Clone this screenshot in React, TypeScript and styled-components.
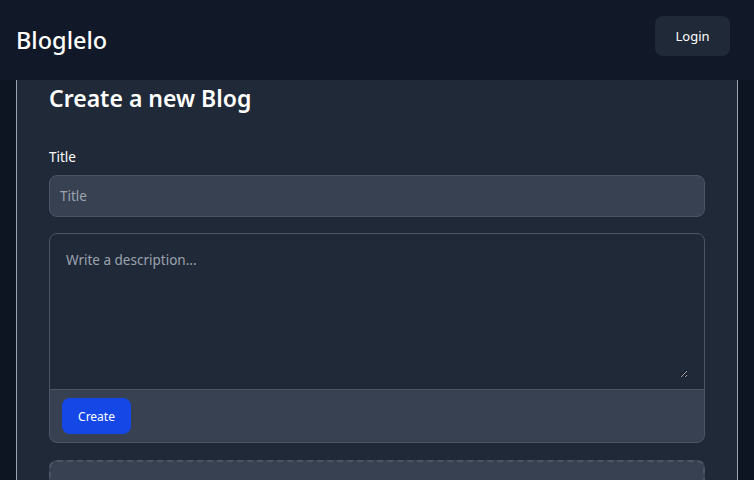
import styled, { createGlobalStyle } from "styled-components";

const GlobalStyle = createGlobalStyle`
  * {
    box-sizing: border-box;
  }
  body {
    margin: 0;
    background-color: #0e1522;
    font-family: "Noto Sans", "Open Sans", sans-serif;
    color: #ffffff;
  }
`;

const Page = styled.div`
  min-height: 480px;
`;

const Header = styled.header`
  height: 80px;
  background-color: #111827;
  display: flex;
  align-items: center;
  justify-content: space-between;
  padding: 0 24px 8px 16px;
`;

const Brand = styled.h1`
  margin: 0;
  font-size: 23.5px;
  font-weight: 500;
  padding-top: 8px;
`;

const LoginButton = styled.button`
  height: 40px;
  width: 75px;
  border: none;
  border-radius: 8px;
  background-color: #1f2937;
  color: #ffffff;
  font-family: inherit;
  font-size: 13px;
  font-weight: 400;
  cursor: pointer;
`;

const Main = styled.main`
  padding: 0 16px;
`;

const Card = styled.section`
  background-color: #1f2937;
  border-left: 1px solid #9ca3af;
  border-right: 1px solid #9ca3af;
  padding: 2px 32px 32px;
  display: flex;
  flex-direction: column;
`;

const Heading = styled.h2`
  margin: 0 0 33px;
  font-size: 23px;
  font-weight: 600;
  line-height: 32px;
`;

const Label = styled.label`
  display: block;
  font-size: 13.5px;
  font-weight: 400;
  margin-bottom: 8px;
  line-height: 20px;
`;

const TextInput = styled.input`
  width: 100%;
  height: 42px;
  padding: 0 10px;
  border: 1px solid #4b5563;
  border-radius: 8px;
  background-color: #374151;
  color: #ffffff;
  font-family: inherit;
  font-size: 13.5px;
  &::placeholder {
    color: #9ca3af;
  }
  &:focus {
    outline: none;
  }
`;

const Field = styled.div`
  margin-bottom: 16px;
`;

const Editor = styled.div`
  border: 1px solid #4b5563;
  border-radius: 8px;
  overflow: hidden;
  background-color: #374151;
  margin-bottom: 17px;
`;

const EditorBody = styled.div`
  background-color: #1f2937;
  padding: 16px 16px 11px;
`;

const TextArea = styled.textarea`
  display: block;
  width: 100%;
  height: 128px;
  padding: 0;
  border: none;
  background: transparent;
  color: #ffffff;
  font-family: inherit;
  font-size: 13.5px;
  line-height: 20px;
  &::placeholder {
    color: #9ca3af;
  }
  &:focus {
    outline: none;
  }
`;

const Toolbar = styled.div`
  border-top: 1px solid #4b5563;
  padding: 8px 12px;
  display: flex;
  align-items: center;
`;

const CreateButton = styled.button`
  height: 36px;
  width: 69px;
  border: none;
  border-radius: 8px;
  background-color: #1447e6;
  color: #ffffff;
  font-family: inherit;
  font-size: 12px;
  font-weight: 400;
  cursor: pointer;
`;

const DropZone = styled.div`
  height: 80px;
  border: 2px dashed #4b5563;
  border-radius: 8px;
  background-color: #374151;
`;

export default function App() {
  return (
    <Page>
      <GlobalStyle />
      <Header>
        <Brand>Bloglelo</Brand>
        <LoginButton>Login</LoginButton>
      </Header>
      <Main>
        <Card>
          <Heading>Create a new Blog</Heading>
          <Field>
            <Label htmlFor="title">Title</Label>
            <TextInput id="title" placeholder="Title" />
          </Field>
          <Editor>
            <EditorBody>
              <TextArea placeholder="Write a description..." />
            </EditorBody>
            <Toolbar>
              <CreateButton>Create</CreateButton>
            </Toolbar>
          </Editor>
          <DropZone />
        </Card>
      </Main>
    </Page>
  );
}
